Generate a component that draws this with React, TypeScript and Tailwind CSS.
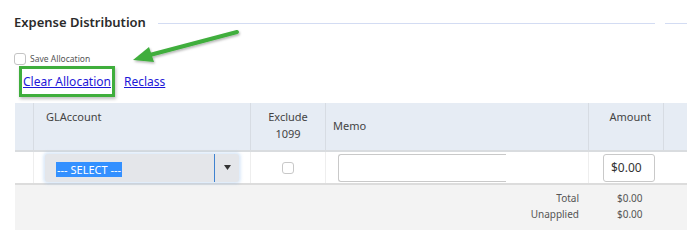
import { useState } from 'react';

const font = { fontFamily: '"Noto Sans", "Open Sans", sans-serif' };

function Arrow() {
  return (
    <svg
      className="absolute left-[128px] top-[26px] pointer-events-none"
      width="116"
      height="42"
      viewBox="0 0 116 42"
    >
      <defs>
        <filter id="sh" x="-20%" y="-50%" width="140%" height="200%">
          <feDropShadow dx="1" dy="1.5" stdDeviation="1.2" floodColor="#000" floodOpacity="0.3" />
        </filter>
      </defs>
      <g filter="url(#sh)">
        <line x1="109" y1="6" x2="18" y2="30" stroke="#3fae3c" strokeWidth="4" strokeLinecap="round" />
        <polygon points="5,34 21,21 26,36" fill="#3fae3c" />
      </g>
    </svg>
  );
}

export default function App() {
  const [save, setSave] = useState(false);

  return (
    <div className="relative w-[687px] h-[243px] bg-white overflow-hidden text-[#333]" style={font}>
      <div className="flex items-center pl-[14px] pt-[11px]">
        <h2 className="text-[13px] leading-[22px] font-semibold text-[#2b2b2b]">Expense Distribution</h2>
        <div className="flex-1 h-px bg-[#d3dcf3] ml-[12px] mt-[2px]" />
        <div className="w-[10px]" />
        <div className="w-[22px] h-px bg-[#d3dcf3] mt-[2px]" />
      </div>

      <label className="flex items-center gap-[4px] pl-[14px] mt-[20px] h-[12px]">
        <input
          type="checkbox"
          checked={save}
          onChange={() => setSave(!save)}
          className="appearance-none w-[12px] h-[12px] rounded-[3px] border border-[#c4c4c4] bg-white"
        />
        <span className="text-[8.5px] text-[#555]">Save Allocation</span>
      </label>

      <div className="flex items-center gap-[13px] pl-[23px] mt-[8px] h-[18px] text-[12px]">
        <a href="#" className="underline text-[#1d17d8]">Clear Allocation</a>
        <a href="#" className="underline text-[#1d17d8]">Reclass</a>
      </div>

      <div className="absolute left-[19px] top-[66px] w-[96px] h-[31px] border-[3px] border-[#3fae3c] shadow-[1px_2px_3px_rgba(0,0,0,0.25)]" />
      <Arrow />

      <div className="ml-[15px] mt-[12px] w-[672px]">
        <div className="grid grid-cols-[19px_217px_75px_263px_75px_1fr] h-[49px] bg-[#e6ecf4] border-b-2 border-[#d9dcdf] text-[11px] text-[#444]">
          <div className="border-r border-[#d7dce3]" />
          <div className="border-r border-[#d7dce3] pl-[12px] pt-[6px]">GLAccount</div>
          <div className="border-r border-[#d7dce3] text-center pt-[5px] leading-[17px]">
            Exclude
            <br />
            1099
          </div>
          <div className="border-r border-[#d7dce3] pl-[7px] flex items-center">Memo</div>
          <div className="border-r border-[#d7dce3] text-right pr-[12px] pt-[6px]">Amount</div>
          <div />
        </div>

        <div className="grid grid-cols-[19px_217px_75px_263px_75px_1fr] h-[33px] bg-white border-b-2 border-[#dcdcdc] items-center">
          <div className="h-full border-r border-[#eeeeee]" />
          <div className="h-full border-r border-[#eeeeee] flex items-center pl-[11px]">
            <div className="flex items-center w-[194px] h-[28px] bg-[#e4e6ea] rounded-[3px] shadow-[0_0_3px_2px_rgba(120,170,230,0.25)]">
              <div className="flex-1 pl-[11px]">
                <span className="bg-[#3390ff] text-white text-[11px] leading-[15px] inline-block px-[1px]">--- SELECT ---</span>
              </div>
              <div className="w-px h-full bg-[#3f82d0]" />
              <div className="w-[24px] flex justify-center">
                <svg width="7" height="5" viewBox="0 0 7 5">
                  <polygon points="0,0 7,0 3.5,5" fill="#333" />
                </svg>
              </div>
            </div>
          </div>
          <div className="h-full border-r border-[#eeeeee] flex items-center justify-center">
            <input
              type="checkbox"
              className="appearance-none w-[12px] h-[12px] rounded-[3px] border border-[#c8c8c8] bg-white"
            />
          </div>
          <div className="h-full border-r border-[#eeeeee] flex items-center pl-[12px]">
            <div className="w-[168px] h-[28px] border border-r-0 border-[#c9c9c9] rounded-l-[3px] bg-white" />
          </div>
          <div className="h-full flex items-center pl-[14px]">
            <div className="w-[52px] h-[28px] border border-[#c9c9c9] rounded-[3px] bg-white flex items-center pl-[7px] text-[12px] text-[#333]">
              $0.00
            </div>
          </div>
          <div />
        </div>

        <div className="h-[45px] bg-[#f3f3f3] flex pt-[5px] text-[10px] leading-[16px] text-[#555]">
          <div className="w-[564px] text-right">
            <div>Total</div>
            <div>Unapplied</div>
          </div>
          <div className="pl-[38px]">
            <div>$0.00</div>
            <div>$0.00</div>
          </div>
        </div>
      </div>
    </div>
  );
}
